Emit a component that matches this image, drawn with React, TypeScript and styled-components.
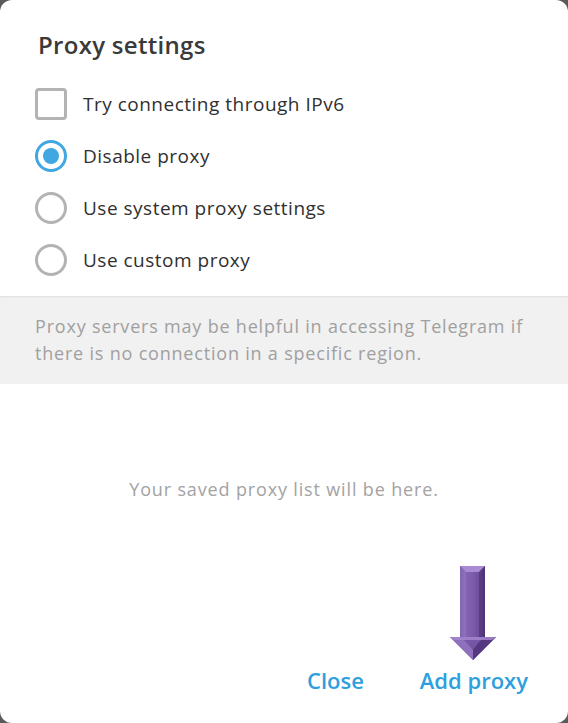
import React, { useState } from 'react'
import styled, { createGlobalStyle } from 'styled-components'

const GlobalStyle = createGlobalStyle`
    html, body {
        margin: 0;
        padding: 0;
        background: #5a5a5a;
    }
    body {
        font-family: 'Open Sans', 'Noto Sans', sans-serif;
    }
`

const options = [
    { id: 'disable', label: 'Disable proxy' },
    { id: 'system', label: 'Use system proxy settings' },
    { id: 'custom', label: 'Use custom proxy' },
]

function DownArrow() {
    return (
        <svg width="50" height="98" viewBox="0 0 50 98">
            <defs>
                <linearGradient id="shaft" x1="0" x2="1" y1="0" y2="0">
                    <stop offset="0" stopColor="#5f3f8c" />
                    <stop offset="0.2" stopColor="#8463b4" />
                    <stop offset="0.5" stopColor="#7d5cac" />
                    <stop offset="0.85" stopColor="#6a4a98" />
                    <stop offset="1" stopColor="#4e3276" />
                </linearGradient>
                <linearGradient id="head" x1="0" x2="0" y1="0" y2="1">
                    <stop offset="0" stopColor="#7a59aa" />
                    <stop offset="1" stopColor="#6b4b9a" />
                </linearGradient>
            </defs>
            {/* shaft */}
            <rect x="12" y="2" width="25" height="72" fill="url(#shaft)" />
            <polygon points="12,2 37,2 31,8 18,8" fill="#a88bd3" />
            <polygon points="12,2 18,8 18,74 12,74" fill="#9275c0" opacity="0.7" />
            <polygon points="37,2 31,8 31,74 37,74" fill="#4d3275" opacity="0.6" />
            {/* head */}
            <polygon points="2,73 48,73 25,96" fill="url(#head)" />
            <polygon points="2,73 12,73 18,78 25,86 25,96" fill="#8e70bc" />
            <polygon points="48,73 37,73 31,78 25,86 25,96" fill="#553880" />
            <polygon points="2,73 48,73 44,76 6,76" fill="#a68ad0" opacity="0.8" />
        </svg>
    )
}

export default function App() {
    const [ipv6, setIpv6] = useState(false)
    const [mode, setMode] = useState('disable')

    return (
        <>
            <GlobalStyle />
            <Dialog>
                <Title>Proxy settings</Title>
                <OptionList>
                    <Row onClick={() => setIpv6(!ipv6)}>
                        <CheckBox $checked={ipv6} />
                        <Label>Try connecting through IPv6</Label>
                    </Row>
                    {options.map((o) => (
                        <Row key={o.id} onClick={() => setMode(o.id)}>
                            <Radio $checked={mode === o.id} />
                            <Label>{o.label}</Label>
                        </Row>
                    ))}
                </OptionList>
                <Hint>
                    Proxy servers may be helpful in accessing Telegram if
                    <br />
                    there is no connection in a specific region.
                </Hint>
                <Empty>Your saved proxy list will be here.</Empty>
                <Footer>
                    <LinkButton>Close</LinkButton>
                    <AddWrap>
                        <ArrowMark>
                            <DownArrow />
                        </ArrowMark>
                        <LinkButton>Add proxy</LinkButton>
                    </AddWrap>
                </Footer>
            </Dialog>
        </>
    )
}

const Dialog = styled.div`
    display: flex;
    flex-direction: column;
    width: 568px;
    height: 723px;
    background: #ffffff;
    border-radius: 12px;
    overflow: hidden;
`

const Title = styled.div`
    padding: 30px 0 0 38px;
    font-size: 24px;
    line-height: 30px;
    font-weight: 600;
    letter-spacing: 0.3px;
    color: #3a3a3a;
`

const OptionList = styled.div`
    display: flex;
    flex-direction: column;
    padding: 18px 0 0 35px;
`

const Row = styled.div`
    display: flex;
    align-items: center;
    gap: 16px;
    height: 52px;
    cursor: pointer;
`

const Label = styled.span`
    font-size: 19px;
    letter-spacing: 0.5px;
    color: #303030;
`

const CheckBox = styled.span<{ $checked: boolean }>`
    box-sizing: border-box;
    width: 32px;
    height: 32px;
    border: 3px solid ${({ $checked }) => ($checked ? '#40a7e3' : '#b3b3b3')};
    background: ${({ $checked }) => ($checked ? '#40a7e3' : '#fff')};
    border-radius: 4px;
`

const Radio = styled.span<{ $checked: boolean }>`
    box-sizing: border-box;
    display: flex;
    align-items: center;
    justify-content: center;
    width: 32px;
    height: 32px;
    border: 3px solid ${({ $checked }) => ($checked ? '#40a7e3' : '#b3b3b3')};
    border-radius: 50%;

    &::after {
        content: '';
        width: 16px;
        height: 16px;
        border-radius: 50%;
        background: #40a7e3;
        display: ${({ $checked }) => ($checked ? 'block' : 'none')};
    }
`

const Hint = styled.div`
    margin-top: 10px;
    padding: 17px 35px;
    background: #f1f1f1;
    box-shadow: inset 0 2px 2px -1px rgba(0, 0, 0, 0.08);
    font-size: 18px;
    letter-spacing: 0.8px;
    line-height: 27px;
    color: #a0a0a0;
    white-space: nowrap;
`

const Empty = styled.div`
    flex: 1;
    padding-top: 92px;
    text-align: center;
    font-size: 18px;
    letter-spacing: 0.85px;
    line-height: 26px;
    color: #a3a3a3;
`

const Footer = styled.div`
    display: flex;
    justify-content: flex-end;
    align-items: center;
    gap: 56px;
    padding: 0 40px 29px 0;
`

const AddWrap = styled.div`
    position: relative;
`

const ArrowMark = styled.div`
    position: absolute;
    left: 28px;
    bottom: 100%;
    margin-bottom: 4px;
    line-height: 0;
`

const LinkButton = styled.span`
    font-size: 22px;
    line-height: 28px;
    font-weight: 600;
    color: #2d9fe0;
    cursor: pointer;
`
